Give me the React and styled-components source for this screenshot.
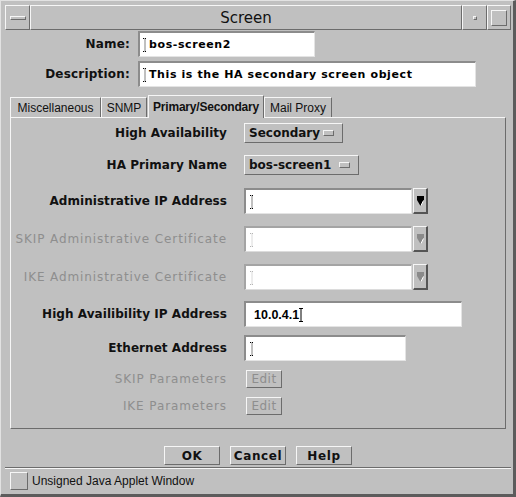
import React from 'react';
import styled, { createGlobalStyle } from 'styled-components';

const GRAY = '#c0c0c0';
const DARK = '#6c6c6c';
const LIGHT = '#f6f6f6';

const GlobalStyle = createGlobalStyle`
  html, body {
    margin: 0;
    padding: 0;
    background: ${GRAY};
  }
  body {
    font-family: "DejaVu Sans", sans-serif;
    color: #111;
  }
`;

const Frame = styled.div`
  width: 516px;
  height: 497px;
  box-sizing: border-box;
  background: ${GRAY};
  border-style: solid;
  border-width: 1px 3px 3px 1px;
  border-color: #e2e2e2 #5c5c5c #5c5c5c #e2e2e2;
  padding: 4px 2px 2px 4px;
  display: flex;
  flex-direction: column;
`;

const TitleBar = styled.div`
  display: flex;
  height: 25px;
  flex-shrink: 0;
`;

const TitleSegment = styled.div`
  box-sizing: border-box;
  width: ${(p) => (p.$w ? `${p.$w}px` : 'auto')};
  flex: ${(p) => (p.$w ? '0 0 auto' : '1')};
  border-style: solid;
  border-width: 1px;
  border-color: ${LIGHT} ${DARK} ${DARK} ${LIGHT};
  display: flex;
  align-items: center;
  justify-content: center;
  font-family: "DejaVu Sans", sans-serif;
  font-size: 15px;
  color: #111;
`;

const Bevel = styled.div`
  box-sizing: border-box;
  width: ${(p) => p.$w}px;
  height: ${(p) => p.$h}px;
  border-style: solid;
  border-width: 1px;
  border-color: ${LIGHT} ${DARK} ${DARK} ${LIGHT};
`;

const Client = styled.div`
  flex: 1;
  display: flex;
  flex-direction: column;
  padding-top: 1px;
`;

const Header = styled.div`
  display: grid;
  grid-template-columns: 125px auto;
  column-gap: 8px;
  row-gap: 4px;
  align-items: center;
`;

const HeaderLabel = styled.div`
  text-align: right;
  font-weight: bold;
  font-size: 12px;
  letter-spacing: 0.2px;
`;

const Field = styled.div`
  box-sizing: border-box;
  width: ${(p) => p.$w}px;
  height: 26px;
  background: #fff;
  border-style: solid;
  border-width: 2px 1px 1px 2px;
  border-color: ${(p) => (p.$disabled ? '#a4a4a4 #dcdcdc #dcdcdc #a4a4a4' : '#8c8c8c #e4e4e4 #e4e4e4 #8c8c8c')};
  display: flex;
  align-items: center;
  padding-left: ${(p) => p.$pad ?? 3}px;
  font-family: ${(p) => (p.$sans ? '"Liberation Sans", Arial, sans-serif' : '"DejaVu Sans", sans-serif')};
  font-weight: bold;
  font-size: ${(p) => (p.$sans ? '12.5px' : '11px')};
  letter-spacing: ${(p) => (p.$sans ? '0' : '0.6px')};
  color: #000;
  white-space: nowrap;
`;

const CaretSvg = styled.svg`
  display: block;
  flex-shrink: 0;
  margin-right: ${(p) => p.$mr ?? 1}px;
`;

function Caret({ solid, color = '#000', mr }) {
  return (
    <CaretSvg width="5" height="14" viewBox="0 0 5 14" $mr={mr}>
      <path
        d="M0 0.5H4M2 0.5V13.5M0 13.5H4"
        stroke={color}
        strokeWidth="1"
        strokeDasharray={solid ? undefined : '1 1'}
        fill="none"
      />
    </CaretSvg>
  );
}

const Tabs = styled.div`
  display: flex;
  align-items: flex-end;
  height: 22px;
  margin: 8px 5px 0;
  position: relative;
  z-index: 1;
`;

const Tab = styled.div`
  box-sizing: border-box;
  width: ${(p) => p.$w}px;
  height: ${(p) => (p.$active ? 23 : 20)}px;
  margin-bottom: ${(p) => (p.$active ? -1 : 0)}px;
  margin-left: ${(p) => p.$ml ?? 0}px;
  background: ${GRAY};
  border-style: solid;
  border-width: 1px 1px 0 1px;
  border-color: ${LIGHT} ${DARK} ${LIGHT} ${LIGHT};
  display: flex;
  align-items: center;
  justify-content: center;
  white-space: nowrap;
  font-family: "Liberation Sans", Arial, sans-serif;
  font-size: 12px;
  font-weight: ${(p) => (p.$active ? 'bold' : 'normal')};
  letter-spacing: ${(p) => (p.$active ? '-0.2px' : '0')};
  color: #111;
`;

const Panel = styled.div`
  box-sizing: border-box;
  height: 312px;
  margin: 0 5px;
  border-style: solid;
  border-width: 1px;
  border-color: ${LIGHT} ${DARK} ${DARK} ${LIGHT};
  display: flex;
  flex-direction: column;
`;

const Row = styled.div`
  display: grid;
  grid-template-columns: 216px auto;
  column-gap: 17px;
  align-items: center;
  height: ${(p) => p.$h}px;
  margin-top: ${(p) => p.$mt}px;
`;

const Label = styled.div`
  text-align: right;
  font-size: 12px;
  white-space: nowrap;
  font-weight: ${(p) => (p.$disabled ? 'normal' : 'bold')};
  color: ${(p) => (p.$disabled ? '#8e8e8e' : '#111')};
  letter-spacing: ${(p) => (p.$disabled ? '0.9px' : '0.05px')};
`;

const Choice = styled.div`
  box-sizing: border-box;
  width: ${(p) => p.$w}px;
  height: 20px;
  border-style: solid;
  border-width: 1px;
  border-color: ${LIGHT} ${DARK} ${DARK} ${LIGHT};
  display: flex;
  align-items: center;
  justify-content: space-between;
  padding: 0 8px 0 4px;
  font-weight: bold;
  font-size: 12px;
  color: #111;
`;

const Combo = styled.div`
  display: flex;
  align-items: center;
`;

const ArrowButton = styled.div`
  box-sizing: border-box;
  width: 15px;
  height: 26px;
  margin-left: 1px;
  border-style: solid;
  border-width: 1px 2px 2px 1px;
  border-color: ${LIGHT} #555 #555 ${LIGHT};
  display: flex;
  align-items: center;
  justify-content: center;
`;

const SmallButton = styled.div`
  box-sizing: border-box;
  width: 36px;
  height: 18px;
  margin-left: 2px;
  border-style: solid;
  border-width: 1px;
  border-color: ${LIGHT} ${DARK} ${DARK} ${LIGHT};
  display: flex;
  align-items: center;
  justify-content: center;
  font-size: 12px;
  color: #8e8e8e;
  letter-spacing: 0.5px;
`;

const ButtonBar = styled.div`
  display: flex;
  justify-content: center;
  gap: 10px;
  margin-top: 17px;
`;

const Button = styled.div`
  box-sizing: border-box;
  width: 56px;
  height: 19px;
  border-style: solid;
  border-width: 1px;
  border-color: ${LIGHT} ${DARK} ${DARK} ${LIGHT};
  display: flex;
  align-items: center;
  justify-content: center;
  font-weight: bold;
  font-size: 12px;
  letter-spacing: 0.6px;
  color: #111;
`;

const StatusBar = styled.div`
  flex: 1;
  margin-top: 2px;
  border-top: 1px solid ${DARK};
  box-shadow: inset 0 1px 0 ${LIGHT};
  display: flex;
  align-items: center;
  gap: 4px;
  padding-left: 5px;
  padding-top: 2px;
`;

const StatusText = styled.span`
  font-family: "Liberation Sans", Arial, sans-serif;
  font-size: 12px;
  color: #111;
`;

function Arrow({ disabled }) {
  const c = disabled ? '#8a8a8a' : '#000';
  return (
    <svg width="9" height="12" viewBox="0 0 9 12">
      <path d="M1 1H8V5L4.5 11L1 5Z" fill={c} />
      <path d="M7.5 5.5L5 10.5" stroke="#fff" strokeWidth="1" />
    </svg>
  );
}

function Indicator() {
  return <Bevel $w={11} $h={6} />;
}

function ComboField({ disabled }) {
  return (
    <Combo>
      <Field $w={168} $disabled={disabled} $pad={4}>
        <Caret color={disabled ? '#b4b4b4' : '#000'} />
      </Field>
      <ArrowButton>
        <Arrow disabled={disabled} />
      </ArrowButton>
    </Combo>
  );
}

export default function App() {
  return (
    <>
      <GlobalStyle />
      <Frame>
        <TitleBar>
          <TitleSegment $w={25}>
            <Bevel $w={16} $h={4} />
          </TitleSegment>
          <TitleSegment>Screen</TitleSegment>
          <TitleSegment $w={25}>
            <Bevel $w={4} $h={4} />
          </TitleSegment>
          <TitleSegment $w={24}>
            <Bevel $w={16} $h={16} />
          </TitleSegment>
        </TitleBar>

        <Client>
          <Header>
            <HeaderLabel>Name:</HeaderLabel>
            <Field $w={177}>
              <Caret />
              bos-screen2
            </Field>
            <HeaderLabel>Description:</HeaderLabel>
            <Field $w={338}>
              <Caret />
              This is the HA secondary screen object
            </Field>
          </Header>

          <Tabs>
            <Tab $w={91}>Miscellaneous</Tab>
            <Tab $w={46}>SNMP</Tab>
            <Tab $w={116} $active $ml={1}>Primary/Secondary</Tab>
            <Tab $w={68}>Mail Proxy</Tab>
          </Tabs>

          <Panel>
            <Row $h={20} $mt={5}>
              <Label>High Availability</Label>
              <Choice $w={99}>
                Secondary
                <Indicator />
              </Choice>
            </Row>
            <Row $h={20} $mt={12}>
              <Label>HA Primary Name</Label>
              <Choice $w={115}>
                bos-screen1
                <Indicator />
              </Choice>
            </Row>
            <Row $h={26} $mt={13}>
              <Label>Administrative IP Address</Label>
              <ComboField />
            </Row>
            <Row $h={26} $mt={12}>
              <Label $disabled>SKIP Administrative Certificate</Label>
              <ComboField disabled />
            </Row>
            <Row $h={26} $mt={12}>
              <Label $disabled>IKE Administrative Certificate</Label>
              <ComboField disabled />
            </Row>
            <Row $h={26} $mt={11}>
              <Label>High Availibility IP Address</Label>
              <Field $w={218} $sans $pad={8}>
                10.0.4.1
                <Caret solid mr={0} />
              </Field>
            </Row>
            <Row $h={26} $mt={8}>
              <Label>Ethernet Address</Label>
              <Field $w={162} $pad={4}>
                <Caret />
              </Field>
            </Row>
            <Row $h={18} $mt={9}>
              <Label $disabled>SKIP Parameters</Label>
              <SmallButton>Edit</SmallButton>
            </Row>
            <Row $h={18} $mt={9}>
              <Label $disabled>IKE Parameters</Label>
              <SmallButton>Edit</SmallButton>
            </Row>
          </Panel>

          <ButtonBar>
            <Button>OK</Button>
            <Button>Cancel</Button>
            <Button>Help</Button>
          </ButtonBar>

          <StatusBar>
            <Bevel $w={18} $h={18} />
            <StatusText>Unsigned Java Applet Window</StatusText>
          </StatusBar>
        </Client>
      </Frame>
    </>
  );
}
